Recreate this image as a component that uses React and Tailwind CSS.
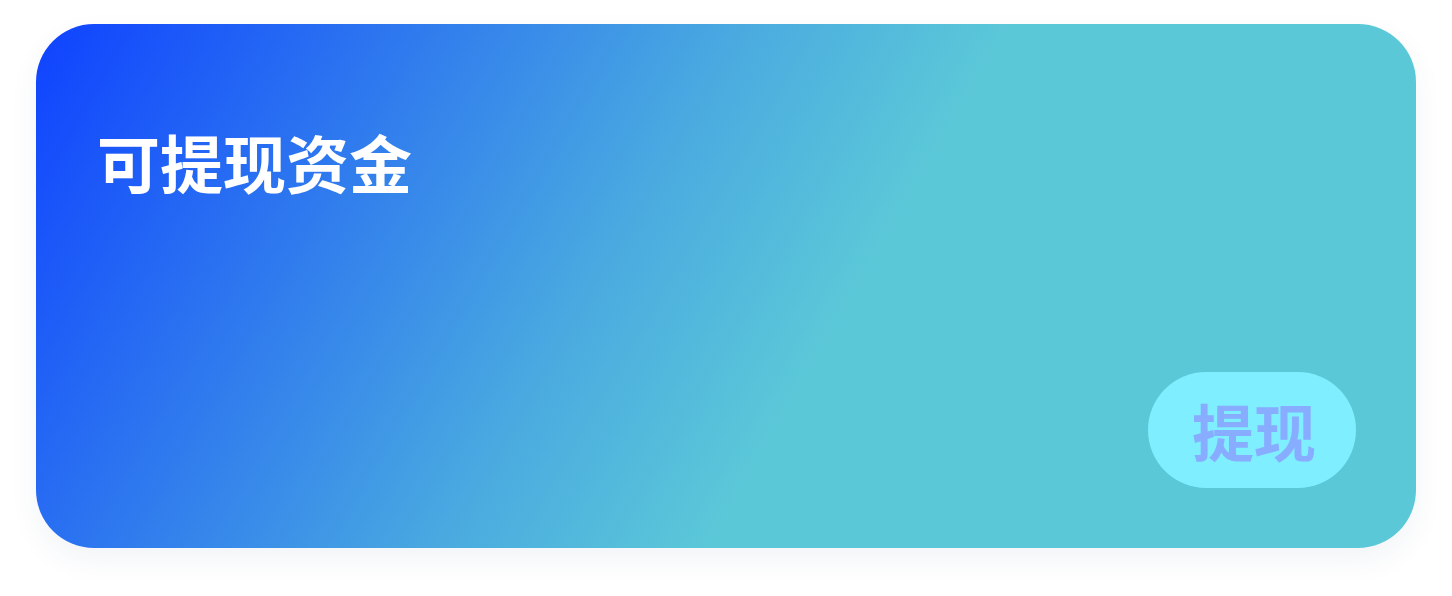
export default function App() {
  const font = { fontFamily: '"Noto Sans CJK SC", "Noto Sans", sans-serif' };
  return (
    <div className="w-[1452px] h-[596px] bg-white pt-[24px] px-[36px] pb-[48px]" style={font}>
      <div className="h-full w-full rounded-[58px] bg-[linear-gradient(120deg,#0f42ff_0%,#4aaae0_42%,#5bc8d8_58%,#5bc8d7_100%)] shadow-[0_12px_30px_rgba(40,60,120,0.06)] flex flex-col">
        <div className="pt-[105px] pl-[61px] text-[63px] leading-[63px] font-semibold text-white">
          可提现资金
        </div>
        <div className="flex-1" />
        <div className="self-end mr-[60px] mb-[60px] w-[208px] h-[116px] rounded-full bg-[#7fefff] flex items-center justify-center pl-[4px] text-[62px] font-semibold text-[#88acff] leading-none">
          提现
        </div>
      </div>
    </div>
  );
}
